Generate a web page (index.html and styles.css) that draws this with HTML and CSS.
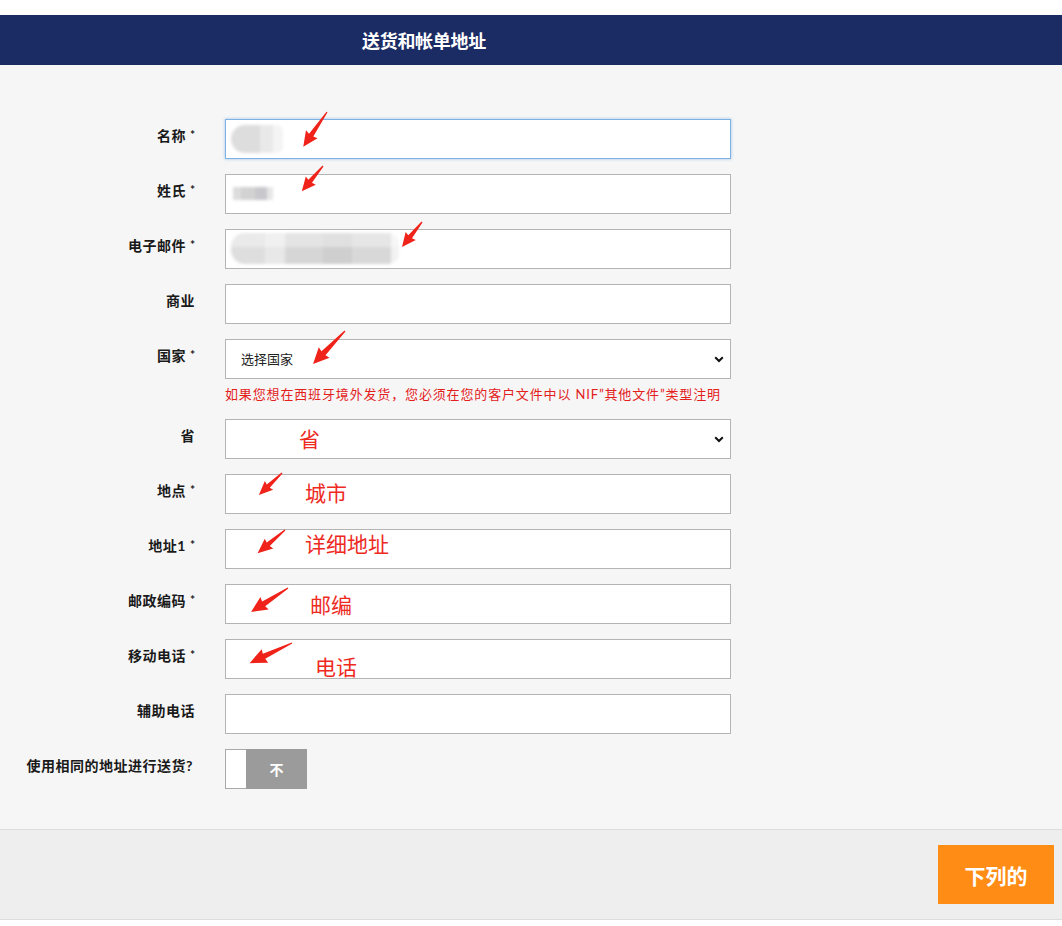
FILE: index.html
```html
<!DOCTYPE html>
<html lang="zh-CN">
<head>
<meta charset="utf-8">
<title>送货和帐单地址</title>
<link rel="stylesheet" href="styles.css">
</head>
<body>
<div class="topgap"></div>
<header class="hdr"><h1 class="hdr-title">送货和帐单地址</h1></header>
<main class="form">
  <div class="row">
    <label class="lbl">名称 <span class="req">*</span></label>
    <div class="field"><input class="inp inp-focus" type="text"><span class="blur blur-name"></span></div>
  </div>
  <div class="row">
    <label class="lbl">姓氏 <span class="req">*</span></label>
    <div class="field"><input class="inp" type="text"><span class="blur blur-surname"></span></div>
  </div>
  <div class="row">
    <label class="lbl">电子邮件 <span class="req">*</span></label>
    <div class="field"><input class="inp" type="text"><span class="blur blur-email"></span></div>
  </div>
  <div class="row">
    <label class="lbl">商业</label>
    <div class="field"><input class="inp" type="text"></div>
  </div>
  <div class="row">
    <label class="lbl">国家 <span class="req">*</span></label>
    <div class="field-col">
      <div class="field">
        <select class="inp sel"><option>选择国家</option></select>
        <svg class="chev" width="10" height="7" viewBox="0 0 10 7"><polyline points="1.2,1.2 5,5 8.8,1.2" fill="none" stroke="#111" stroke-width="2"/></svg>
      </div>
      <div class="note">如果您想在西班牙境外发货，您必须在您的客户文件中以 NIF”其他文件”类型注明</div>
    </div>
  </div>
  <div class="row">
    <label class="lbl">省</label>
    <div class="field">
      <select class="inp sel"><option></option></select>
      <svg class="chev" width="10" height="7" viewBox="0 0 10 7"><polyline points="1.2,1.2 5,5 8.8,1.2" fill="none" stroke="#111" stroke-width="2"/></svg>
      <span class="mark mark-prov">省</span>
    </div>
  </div>
  <div class="row">
    <label class="lbl">地点 <span class="req">*</span></label>
    <div class="field"><input class="inp" type="text"><span class="mark mark-city">城市</span></div>
  </div>
  <div class="row">
    <label class="lbl">地址1 <span class="req">*</span></label>
    <div class="field"><input class="inp" type="text"><span class="mark mark-addr">详细地址</span></div>
  </div>
  <div class="row">
    <label class="lbl">邮政编码 <span class="req">*</span></label>
    <div class="field"><input class="inp" type="text"><span class="mark mark-zip">邮编</span></div>
  </div>
  <div class="row">
    <label class="lbl">移动电话 <span class="req">*</span></label>
    <div class="field"><input class="inp" type="text"><span class="mark mark-tel">电话</span></div>
  </div>
  <div class="row">
    <label class="lbl">辅助电话</label>
    <div class="field"><input class="inp" type="text"></div>
  </div>
  <div class="row">
    <label class="lbl lbl-last">使用相同的地址进行送货?</label>
    <div class="toggle"><span class="tg-knob"></span><span class="tg-off">不</span></div>
  </div>
</main>
<footer class="ftr"><button class="btn-next" type="button">下列的</button></footer>

<svg class="annot" width="1062" height="926" viewBox="0 0 1062 926">
  <g fill="#f0231a">
    <polygon transform="translate(327,112) rotate(124.4)" points="0,-0.6 28,-2.6 27,-7 42,0 27,7 28,2.6 0,0.6"/>
    <polygon transform="translate(323,166) rotate(130)" points="0,-0.6 20,-2.4 19,-6.5 33,0 19,6.5 20,2.4 0,0.6"/>
    <polygon transform="translate(422,222) rotate(128.7)" points="0,-0.6 19,-2.4 18,-6.5 32,0 18,6.5 19,2.4 0,0.6"/>
    <polygon transform="translate(345,331) rotate(134)" points="0,-0.6 31,-2.8 30,-7.5 46,0 30,7.5 31,2.8 0,0.6"/>
    <polygon transform="translate(282,473) rotate(136.3)" points="0,-0.6 19,-2.2 18,-6 32,0 18,6 19,2.2 0,0.6"/>
    <polygon transform="translate(285,530) rotate(139.6)" points="0,-0.6 22,-2.4 21,-6.5 36,0 21,6.5 22,2.4 0,0.6"/>
    <polygon transform="translate(288,588) rotate(147)" points="0,-0.6 29,-2.8 28,-7.5 44,0 28,7.5 29,2.8 0,0.6"/>
    <polygon transform="translate(292,643) rotate(154.5)" points="0,-0.6 31,-2.8 30,-7.5 47,0 30,7.5 31,2.8 0,0.6"/>
  </g>
</svg>
</body>
</html>
```

FILE: styles.css
```css
* { box-sizing: border-box; }
html, body { margin: 0; padding: 0; }
body {
  width: 1062px;
  height: 926px;
  overflow: hidden;
  background: #ffffff;
  font-family: Lato, "Noto Sans CJK SC", sans-serif;
  color: #222;
  position: relative;
}
.topgap { height: 15px; background: #fff; }
.hdr {
  height: 50px;
  background: #1b2b63;
  display: flex;
  align-items: center;
  padding-left: 362px;
}
.hdr-title {
  margin: 0;
  font-size: 18px;
  font-weight: 700;
  color: #fff;
  font-family: "Noto Sans CJK SC", sans-serif;
  letter-spacing: -0.3px;
}
.form {
  background: #f6f6f6;
  padding: 54px 0 40px 0;
  display: flex;
  flex-direction: column;
  gap: 15px;
  height: 764px;
}
.row {
  display: flex;
  align-items: flex-start;
  gap: 30px;
}
.lbl {
  width: 195px;
  flex: none;
  text-align: right;
  font-size: 14px;
  font-weight: 700;
  line-height: 18px;
  padding-top: 8px;
  letter-spacing: 0.5px;
  color: #1a1a1a;
  white-space: nowrap;
  font-family: Lato, "Noto Sans CJK SC", sans-serif;
}
.lbl-last { padding-right: 2px; }
.req {
  font-size: 12px;
  letter-spacing: 0;
  position: relative;
  top: -2px;
}
.field-col { display: flex; flex-direction: column; }
.field {
  position: relative;
  width: 506px;
  height: 40px;
}
.inp {
  display: block;
  width: 506px;
  height: 40px;
  margin: 0;
  border: 1px solid #b4b4b4;
  background: #fff;
  border-radius: 0;
  outline: none;
  padding: 0 15px;
  font-family: Lato, "Noto Sans CJK SC", sans-serif;
  font-size: 13px;
  color: #222;
}
.inp-focus {
  border-color: #7fb2e3;
  box-shadow: 0 0 3px rgba(100, 160, 225, 0.6);
}
.sel {
  -webkit-appearance: none;
  appearance: none;
}
.chev {
  position: absolute;
  right: 7px;
  top: 17px;
}
.note {
  margin-top: 6px;
  height: 19px;
  line-height: 19px;
  font-size: 13px;
  letter-spacing: 0.85px;
  color: #e3201b;
  white-space: nowrap;
  font-family: Lato, "Noto Sans CJK SC", sans-serif;
}
.blur {
  position: absolute;
  filter: blur(1.5px);
}
.blur-name {
  left: 6px; top: 6px; width: 52px; height: 28px;
  border-radius: 14px 6px 6px 14px;
  background: linear-gradient(90deg, #dddddd 0 55%, #e9e9e9 55% 80%, #f4f4f4 80%);
}
.blur-surname {
  left: 8px; top: 13px; width: 40px; height: 13px;
  background: linear-gradient(90deg, #dcdcdc 0 20%, #d2d2d2 20% 55%, #c8c8cc 55% 85%, #e6e6e6 85%);
}
.blur-email {
  left: 6px; top: 4px; width: 168px; height: 31px;
  border-radius: 14px 10px 10px 14px;
  background:
    linear-gradient(180deg, rgba(255,255,255,0.35) 0 45%, rgba(0,0,0,0) 45%),
    linear-gradient(90deg, #dedede 0 20%, #e8e8e8 20% 32%, #d6d6d6 32% 55%, #cfcfcf 55% 72%, #d8d8d8 72% 95%, #f2f2f2 95%);
}
.mark {
  position: absolute;
  font-size: 21px;
  line-height: 24px;
  color: #ee2a1f;
  font-family: "Noto Sans CJK SC", sans-serif;
  white-space: nowrap;
}
.mark-prov { left: 74px; top: 7px; }
.mark-city { left: 80px; top: 6px; }
.mark-addr { left: 80px; top: 2px; }
.mark-zip { left: 85px; top: 8px; }
.mark-tel { left: 90px; top: 15px; }
.toggle {
  display: flex;
  height: 40px;
  width: 82px;
}
.tg-knob {
  width: 21px;
  height: 40px;
  background: #fff;
  border: 1px solid #a9a9a9;
  border-right: none;
}
.tg-off {
  width: 61px;
  height: 40px;
  background: #9b9b9b;
  color: #fff;
  font-weight: 700;
  font-size: 14px;
  display: flex;
  align-items: center;
  justify-content: center;
  font-family: "Noto Sans CJK SC", sans-serif;
}
.ftr {
  background: #eeeeee;
  border-top: 1px solid #dcdcdc;
  border-bottom: 1px solid #dcdcdc;
  padding: 15px 8px 15px 0;
  display: flex;
  justify-content: flex-end;
}
.btn-next {
  width: 116px;
  height: 59px;
  border: none;
  background: #ff8c14;
  color: #fff;
  font-size: 21px;
  font-weight: 700;
  font-family: "Noto Sans CJK SC", sans-serif;
  padding: 0;
  cursor: pointer;
}
.annot {
  position: absolute;
  left: 0;
  top: 0;
  pointer-events: none;
}
```
